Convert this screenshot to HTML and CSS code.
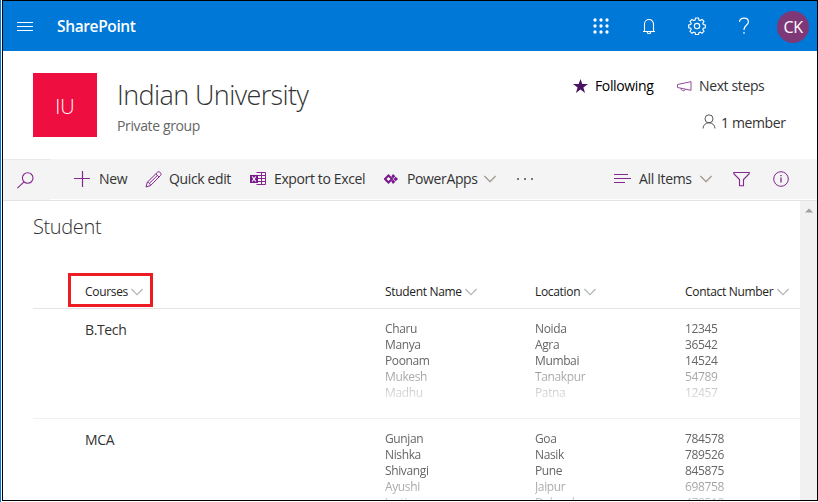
FILE: index.html
```html
<!DOCTYPE html>
<html lang="en">
<head>
<meta charset="utf-8">
<title>Indian University - Student</title>
<link rel="stylesheet" href="styles.css">
</head>
<body>
<div class="window">
  <header class="suite">
    <svg class="menu" width="16" height="12" viewBox="0 0 16 12"><path d="M0 1.5h16M0 5.5h16M0 9.5h16" stroke="#fff"/></svg>
    <span class="brand">SharePoint</span>
    <div class="suite-icons">
      <svg width="16" height="16" viewBox="0 0 16 16" stroke="#fff" stroke-width="3.300" stroke-linecap="round"><path d="M2 2h0M8 2h0M14 2h0M2 8h0M8 8h0M14 8h0M2 14h0M8 14h0M14 14h0"/></svg>
      <svg width="16" height="16" viewBox="0 0 16 16" fill="none" stroke="#fff" stroke-width="1.1"><path d="M2 13.5h12M3.500 13.500V6a4.500 4.500 0 0 1 9 0v7.500M6.300 14a1.700 1.700 0 0 0 3.400 0"/></svg>
      <svg width="18" height="18" viewBox="0 0 18 18" fill="none" stroke="#fff" stroke-width="1.150"><path d="M7.500 1h3l.4 2.100 1.300.5 1.800-1.200 2 2-1.200 1.800.5 1.300 2 .4v2.900l-2 .4-.5 1.300 1.200 1.800-2 2-1.800-1.200-1.300.5-.4 2h-3l-.4-2-1.300-.5L4 16.300l-2-2 1.200-1.800-.5-1.300-2-.4V7.900l2-.4.5-1.300L2 4.400l2-2 1.800 1.200 1.300-.5z"/><circle cx="9" cy="9" r="2.700"/></svg>
      <svg width="12" height="18" viewBox="0 0 12 18" fill="none" stroke="#fff" stroke-width="1.200"><path d="M1.600 5V4.200C2 2.300 3.800 1.100 6 1.100c2.500 0 4.400 1.400 4.400 3.800 0 3.200-4.400 3.600-4.400 7.500v.6M6 15v1.800"/></svg>
    </div>
    <span class="avatar">CK</span>
  </header>

  <section class="site">
    <div class="logo">IU</div>
    <div class="site-name">
      <h1>Indian University</h1>
      <p>Private group</p>
    </div>
    <div class="site-actions">
      <div class="action-row">
        <svg class="star" width="15" height="14" viewBox="0 0 15 14"><path d="M7.500 0l1.800 5.100H15l-4.600 3.300L12.100 14 7.500 10.600 2.900 14l1.700-5.600L0 5.100h5.700z" fill="#4b1263"/></svg>
        <span class="following">Following</span>
        <svg class="horn" width="15" height="11" viewBox="0 0 15 11" fill="none" stroke="#93479f"><path d="M.5 3.500L14 .7v8.600L.5 6.500zM4 7.300c0 3 4 3 4.500.8"/></svg>
        <span class="next">Next steps</span>
      </div>
      <div class="action-row member-row">
        <svg class="person" width="14" height="15" viewBox="0 0 14 15" fill="none" stroke="#555"><circle cx="7" cy="4.800" r="4"/><path d="M1 14.500c.2-3.500 2.600-5.700 6-5.700s5.800 2.200 6 5.700"/></svg>
        <span class="member">1 member</span>
      </div>
    </div>
  </section>

  <nav class="commands">
    <div class="search"><svg width="17" height="17" viewBox="0 0 17 17" fill="none" stroke="#84278f" stroke-width="1.100"><circle cx="10.700" cy="6" r="5.300"/><path d="M7 9.800L.4 16.200"/></svg></div>
    <div class="bar">
      <svg class="i-new" width="16" height="16" viewBox="0 0 16 16" stroke="#84278f" stroke-width="1.200"><path d="M0 7.500h16M8.500 0v16"/></svg>
      <span class="t-new">New</span>
      <svg class="i-edit" width="18" height="18" viewBox="0 0 18 18" fill="none" stroke="#84278f"><path d="M1 17l1.300-4.800L12.500 2.200c1.800-1.500 4.600 1.300 3.100 3.200L5.500 15.600zM2.300 12.200c1.700.1 3 1.500 3.200 3.400M10.800 3.900l3.200 3.200M4.500 13.200l7.500-7.400"/></svg>
      <span class="t-edit">Quick edit</span>
      <svg class="i-xls" width="16" height="16" viewBox="0 0 16 16"><path d="M6.500 1.500h9v12h-9M6 4.500h9.500M6 7.500h9.500M6 10.500h9.500M11.500 1v12.500" fill="none" stroke="#84278f"/><path d="M0 4h8v8H0z" fill="#77198a"/><path d="M2.200 5.500l3.600 5M5.800 5.500l-3.600 5" stroke="#fff" stroke-width="1.200"/></svg>
      <span class="t-xls">Export to Excel</span>
      <svg class="i-pa" width="14" height="10" viewBox="0 0 14 10"><path d="M4.500 1.500L8 5 4.500 8.500 1 5z" fill="none" stroke="#77198a" stroke-width="2"/><path d="M9 0l2.300 2.300L9 4.600 7.300 2.500zM9 5.400l2.300 2.300L9 10 7.300 7.500zM11.700 2.700L14 5l-2.300 2.300L9.500 5z" fill="#77198a"/></svg>
      <span class="t-pa">PowerApps</span>
      <svg class="chev" width="12" height="8" viewBox="0 0 12 8"><path d="M.4 1L6 6.600 11.600 1" fill="none" stroke="#a0948a" stroke-width="1.200"/></svg>
      <svg class="dots" width="16" height="2" viewBox="0 0 16 2" fill="#777"><path d="M0 0h2v2H0zM7 0h2v2H7zM14 0h2v2h-2z"/></svg>
      <svg class="i-view" width="17" height="12" viewBox="0 0 17 12"><path d="M0 1.500h14M0 5.500h17M0 9.500h11" stroke="#84278f"/></svg>
      <span class="t-view">All Items</span>
      <svg class="chev" width="12" height="8" viewBox="0 0 12 8"><path d="M.4 1L6 6.600 11.600 1" fill="none" stroke="#a0948a" stroke-width="1.200"/></svg>
      <svg class="i-filter" width="17" height="16" viewBox="0 0 17 16" fill="none" stroke="#84278f" stroke-width="1.100"><path d="M.8 1.500h15.400v1.200L10.500 8.500v6.200h-4V8.500L.8 2.700z"/></svg>
      <svg class="i-info" width="16" height="16" viewBox="0 0 16 16" fill="none" stroke="#84278f"><circle cx="8" cy="8" r="7.300"/><path d="M8 6.500v5M8 4v1.300" stroke-width="1.300"/></svg>
    </div>
  </nav>

  <main class="content">
    <div class="list">
      <h2>Student</h2>
      <div class="row head">
        <div class="course-head"><span class="h-course">Courses</span><svg width="12" height="8" viewBox="0 0 12 8"><path d="M.4 1L6 6.600 11.600 1"/></svg></div>
        <div><span class="h-name">Student Name</span><svg width="12" height="8" viewBox="0 0 12 8"><path d="M.4 1L6 6.600 11.600 1"/></svg></div>
        <div><span class="h-loc">Location</span><svg width="12" height="8" viewBox="0 0 12 8"><path d="M.4 1L6 6.600 11.600 1"/></svg></div>
        <div><span class="h-num">Contact Number</span><svg width="12" height="8" viewBox="0 0 12 8"><path d="M.4 1L6 6.600 11.600 1"/></svg></div>
      </div>
      <div class="row item">
        <div class="course">B.Tech</div>
        <div class="lines">Charu<br>Manya<br>Poonam<br>Mukesh<br>Madhu</div>
        <div class="lines">Noida<br>Agra<br>Mumbai<br>Tanakpur<br>Patna</div>
        <div class="lines">12345<br>36542<br>14524<br>54789<br>12457</div>
      </div>
      <div class="row item">
        <div class="course">MCA</div>
        <div class="lines">Gunjan<br>Nishka<br>Shivangi<br>Ayushi<br>Jyoti</div>
        <div class="lines">Goa<br>Nasik<br>Pune<br>Jaipur<br>Dehradun</div>
        <div class="lines">784578<br>789526<br>845875<br>698758<br>478512</div>
      </div>
    </div>
    <div class="scroll"><svg width="8" height="5" viewBox="0 0 8 5"><path d="M0 4.500L4 .5l4 4z" fill="#a0a0a0"/></svg></div>
  </main>
</div>
</body>
</html>
```

FILE: styles.css
```css
* { box-sizing: border-box; }
body {
  margin: 0;
  height: 502px;
  overflow: hidden;
  padding: 0 0 1px 1px;
  border-left: 1px solid #0078d7;
  background: #fff;
  color: #333;
  font: 14px/18px "Open Sans", "Noto Sans", sans-serif;
  letter-spacing: -.37px;
}
svg { display: block; flex: none; }
span { white-space: nowrap; flex: none; }
h1, h2, p { margin: 0; font-weight: 300; white-space: nowrap; }
.window {
  height: 501px;
  border: 1px solid #000;
  overflow: hidden;
  display: flex;
  flex-direction: column;
}

/* Suite bar */
.suite {
  flex: none;
  height: 50px;
  background: #0078d7;
  color: #fff;
  display: flex;
  align-items: center;
}
.menu { margin: 1px 0 0 14px; }
.brand { margin: -1px 0 0 24px; width: 100px; font-size: 15.500px; font-weight: 600; letter-spacing: -.37px; }
.suite-icons { display: flex; align-items: center; margin-left: auto; gap: 32px; margin-right: 27px; }
.suite-icons svg:nth-child(3) { margin-left: -1px; }
.avatar {
  width: 32px;
  height: 32px;
  margin-right: 8px;
  margin-top: 2px;
  border-radius: 50%;
  background: #7e3878;
  font-size: 16px;
  line-height: 33px;
  text-align: center;
}

/* Site header */
.site { flex: none; height: 108px; display: flex; padding: 22px 0 0 30px; }
.logo {
  width: 64px;
  height: 64px;
  background: #ee0f40;
  color: #fff;
  font-size: 20px;
  font-weight: 300;
  line-height: 67px;
  text-align: center;
  letter-spacing: 0;
}
.site-name { margin-left: 20px; }
h1 { font-size: 27px; line-height: 36px; padding-top: 4px; letter-spacing: -.6px; }
.site-name p { font-weight: 400; color: #666; margin-top: 4px; }
.site-actions { margin-left: auto; width: 244px; padding-top: 4px; }
.action-row { display: flex; align-items: center; height: 18px; }
.member-row { margin-top: 19px; padding-left: 129px; }
.following { color: #000; margin-left: 7px; width: 82px; }
.next { margin-left: 7px; }
.person { margin-top: -3px; }
.member { margin-left: 5px; }

/* Command bar */
.commands { flex: none; height: 42px; display: flex; border-bottom: 1px solid #e3e3e3; }
.search { width: 47px; background: #f4f4f4; border-top: 1px solid #eaeaea; padding: 12px 0 0 14px; }
.bar { flex: 1; height: 40px; background: #f4f4f4; display: flex; align-items: center; padding-left: 25px; }
.i-new { margin-left: -1px; }
.t-new { margin-left: 9px; width: 46px; }
.t-edit { margin-left: 6px; width: 81px; }
.t-xls { margin-left: 8px; width: 110px; }
.t-pa { margin-left: 9px; width: 77px; }
.dots { margin: 0 81px 0 21px; }
.t-view { margin-left: 8px; width: 61px; }
.i-filter { margin-left: 21px; }
.i-info { margin-left: 23px; }

/* List */
.content { flex: 1; min-height: 0; display: flex; }
.list { flex: 1; padding-left: 30px; overflow: hidden; }
.scroll { width: 17px; background: #f1f1f1; padding: 7px 0 0 5px; }
h2 { font-size: 20px; line-height: 28px; padding-top: 12px; height: 72px; }
.row { display: grid; grid-template-columns: 300px 150px 150px 1fr; padding-left: 52px; }
.head { height: 36px; border-bottom: 1px solid #e5e5e5; font-size: 12px; color: #222; letter-spacing: -.32px; }
.head > div { display: flex; align-items: center; gap: 4px; height: 37px; }
.head > .course-head {
  width: 85px;
  height: 34px;
  margin-left: -17px;
  padding: 3px 0 0 14px;
  border: 3px solid #ed1c24;
}
.head path { fill: none; stroke: #b5b5b5; stroke-width: 1.200; }
.h-course { width: 42px; }
.h-name { width: 76px; }
.h-loc { width: 45px; }
.h-num { width: 88px; }
.item { height: 110px; border-bottom: 1px solid #f1f1f1; padding-top: 12px; }
.lines {
  height: 80px;
  font-size: 12px;
  line-height: 16px;
  letter-spacing: -.37px;
  color: #666;
  -webkit-mask-image: linear-gradient(#000 48px, rgba(0, 0, 0, .68) 49px, rgba(0, 0, 0, .15) 80px);
  mask-image: linear-gradient(#000 48px, rgba(0, 0, 0, .68) 49px, rgba(0, 0, 0, .15) 80px);
}
```
